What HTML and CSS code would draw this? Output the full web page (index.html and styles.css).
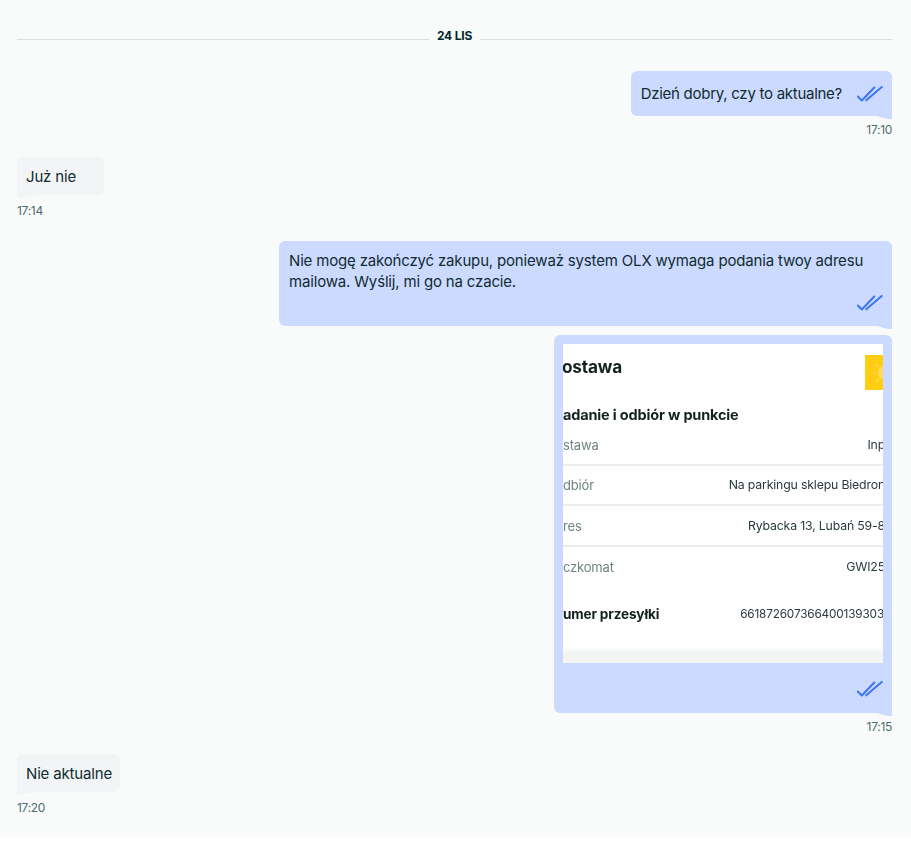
FILE: index.html
```html
<!DOCTYPE html>
<html lang="pl">
<head>
<meta charset="utf-8">
<title>Czat</title>
<link rel="stylesheet" href="styles.css">
</head>
<body>
<main class="chat">
  <div class="date"><span class="date-line"></span><span class="date-text">24 LIS</span><span class="date-line"></span></div>

  <div class="msg out first">
    <div class="bubble inline"><span>Dzień dobry, czy to aktualne?</span>
      <svg class="tick" viewBox="0 0 26 18"><path d="M.8 11.5 L4.8 15.5 L17.3 2.5 M9.3 15.3 L24.7 2" /></svg>
    </div>
    <div class="time">17:10</div>
  </div>

  <div class="msg in gap-a">
    <div class="bubble short">Już nie</div>
    <div class="time">17:14</div>
  </div>

  <div class="msg out gap-b">
    <div class="bubble wide">
      <p class="text">Nie mogę zakończyć zakupu, ponieważ system OLX wymaga podania twoy adresu mailowa. Wyślij, mi go na czacie.</p>
      <svg class="tick block" viewBox="0 0 26 18"><path d="M.8 11.5 L4.8 15.5 L17.3 2.5 M9.3 15.3 L24.7 2" /></svg>
    </div>
  </div>

  <div class="msg out gap-c">
    <div class="bubble photo">
      <div class="shot">
        <div class="shot-inner">
          <div class="shot-head"><span class="shot-title">ostawa</span>
            <svg class="shot-logo" viewBox="0 0 18 35"><rect width="18" height="35" fill="#ffce12"/><circle cx="20" cy="18" r="7" fill="#ffdc5c"/><path d="M20 6V9M11 9l3 3M8 18h3M11 27l3-3M20 30v-3" stroke="#ffdc5c" stroke-width="1.5"/></svg>
          </div>
          <div class="shot-sub">adanie i odbiór w punkcie</div>
          <div class="shot-row line"><span class="k">stawa</span><span class="v">Inp</span></div>
          <div class="shot-row line"><span class="k">dbiór</span><span class="v">Na parkingu sklepu Biedron</span></div>
          <div class="shot-row line"><span class="k">res</span><span class="v">Rybacka 13, Lubań 59-8</span></div>
          <div class="shot-row"><span class="k">czkomat</span><span class="v">GWI25</span></div>
          <div class="shot-row num"><span class="b">umer przesyłki</span><span class="n">661872607366400139303</span></div>
          <div class="shot-foot"></div>
        </div>
      </div>
      <svg class="tick block" viewBox="0 0 26 18"><path d="M.8 11.5 L4.8 15.5 L17.3 2.5 M9.3 15.3 L24.7 2" /></svg>
    </div>
    <div class="time">17:15</div>
  </div>

  <div class="msg in gap-d">
    <div class="bubble">Nie aktualne</div>
    <div class="time">17:20</div>
  </div>
</main>
</body>
</html>
```
FILE: styles.css
```css
* { box-sizing: border-box; }
html { background: #fff; }
body {
  margin: 0;
  font-family: Inter, "Liberation Sans", sans-serif;
  color: #002f34;
}
.chat {
  background: #f9fbfa;
  height: 837px;
  padding: 27px 19px 0 17px;
  display: flex;
  flex-direction: column;
  overflow: hidden;
}
.date {
  display: flex;
  align-items: center;
  gap: 8px;
  height: 18px;
}
.date-line { flex: 1; height: 1px; background: #d8dfe0; margin-top: 6px; }
.date-text { font-size: 12px; font-weight: 700; line-height: 18px; color: #02282c; letter-spacing: -0.2px; }
.msg { display: flex; flex-direction: column; }
.out { align-items: flex-end; }
.in { align-items: flex-start; }
.first { margin-top: 26px; }
.gap-a { margin-top: 18px; }
.gap-b { margin-top: 21px; }
.gap-c { margin-top: 9px; }
.gap-d { margin-top: 18px; }
.bubble {
  position: relative;
  font-size: 15px;
  line-height: 20px;
  letter-spacing: -0.17px;
  border-radius: 6px;
  padding: 10px 8px 8px 9px;
  background: #f3f4f6;
  color: #0f2c30;
}
.short { min-width: 87px; }
.in .bubble { border-bottom-left-radius: 0; }
.out .bubble { background: #cddaff; border-bottom-right-radius: 0; }
.in .bubble::after,
.out .bubble::after {
  content: "";
  position: absolute;
  bottom: -3px;
  height: 3px;
  background: inherit;
}
.in .bubble::after { left: 0; width: 22px; clip-path: polygon(0 0, 100% 0, 40% 55%, 12% 100%, 0 100%); }
.out .bubble::after { right: 0; width: 15px; clip-path: polygon(0 0, 100% 0, 100% 100%, 75% 100%, 40% 55%); }
.inline { display: flex; align-items: center; gap: 15px; padding: 13px 9px 12px 10px; letter-spacing: -0.27px; }
.wide { width: 613px; padding: 9px 9px 14px 10px; }
.text { margin: 0; line-height: 21px; }
.photo { width: 338px; padding: 9px 9px 15px 9px; }
.tick { width: 26px; height: 18px; flex: none; display: block; }
.tick path { fill: none; stroke: #3f78f0; stroke-width: 2.1; stroke-linecap: round; stroke-linejoin: round; }
.block { margin: 2px 0 0 auto; }
.photo .block { margin-top: 17px; }
.time { font-size: 12px; line-height: 18px; color: #4b6c70; letter-spacing: -0.3px; margin-top: 5px; }
.in .time { margin-top: 7px; }
.shot {
  width: 320px;
  height: 319px;
  background: #fff;
  overflow: hidden;
}
.shot-inner { height: 100%; padding-top: 11px; color: #14211f; filter: blur(0.35px); }
.shot-head { display: flex; justify-content: space-between; height: 35px; align-items: flex-start; }
.shot-title { font-size: 17.2px; font-weight: 700; line-height: 24px; margin-left: -1px; }
.shot-logo { width: 18px; height: 35px; display: block; }
.shot-sub { font-size: 14.5px; font-weight: 700; line-height: 20px; margin-top: 15px; }
.shot-row {
  display: flex;
  justify-content: space-between;
  align-items: center;
  font-size: 13px;
  height: 40.5px;
  padding-top: 1px;
  white-space: nowrap;
}
.shot-row.line { border-bottom: 2px solid #ececec; }
.k { color: #6f8580; }
.v { color: #2b3a3c; font-size: 12.3px; margin-right: -2px; }
.n { color: #2b3a3c; font-size: 11.8px; margin-right: -1px; }
.b { font-weight: 700; font-size: 13.6px; }
.num { height: 52px; }
.shot-foot { height: 16px; margin-top: 8px; background: linear-gradient(#fff, #f0f4f1 40%, #f4f6f4); }
```
